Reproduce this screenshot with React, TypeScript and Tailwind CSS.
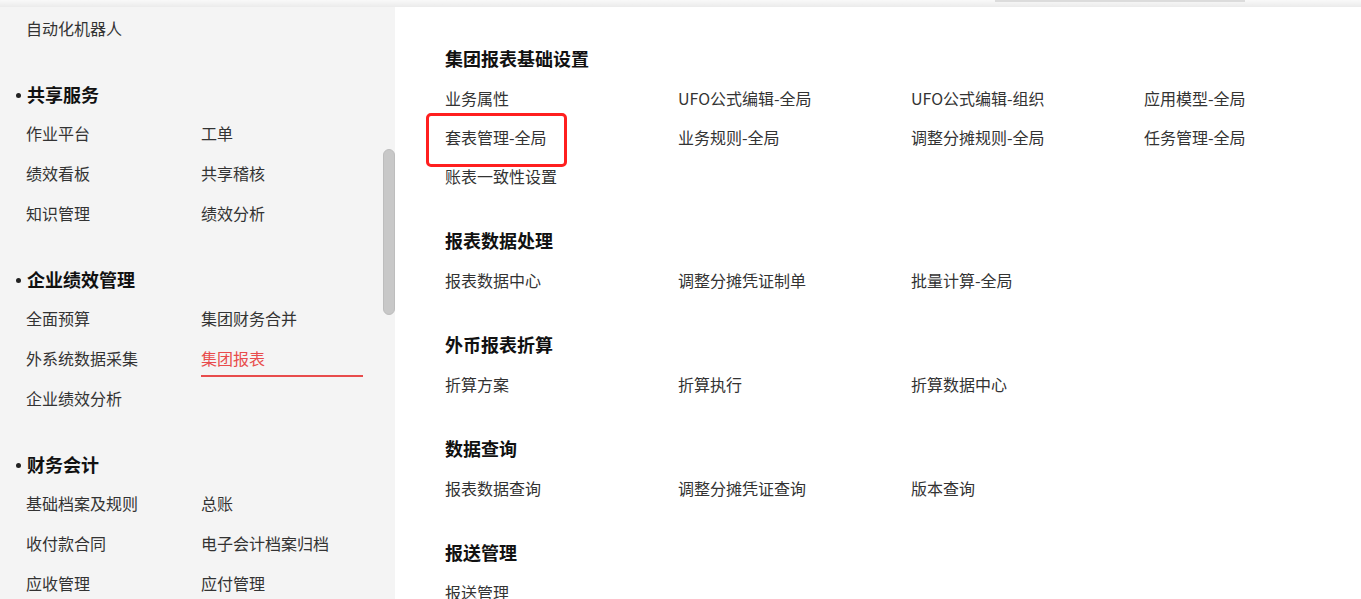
import React from "react";

const font = { fontFamily: '"Noto Sans CJK SC", "Microsoft YaHei", "Liberation Sans", sans-serif' };

type Item = { label: string; active?: boolean };
type LeftSection = { title: string; items: Item[] };

const leftSections: LeftSection[] = [
  { title: "共享服务", items: [{ label: "作业平台" }, { label: "工单" }, { label: "绩效看板" }, { label: "共享稽核" }, { label: "知识管理" }, { label: "绩效分析" }] },
  { title: "企业绩效管理", items: [{ label: "全面预算" }, { label: "集团财务合并" }, { label: "外系统数据采集" }, { label: "集团报表", active: true }, { label: "企业绩效分析" }] },
  { title: "财务会计", items: [{ label: "基础档案及规则" }, { label: "总账" }, { label: "收付款合同" }, { label: "电子会计档案归档" }, { label: "应收管理" }, { label: "应付管理" }] },
];

const rightSections: { title: string; items: string[] }[] = [
  { title: "集团报表基础设置", items: ["业务属性", "UFO公式编辑-全局", "UFO公式编辑-组织", "应用模型-全局", "套表管理-全局", "业务规则-全局", "调整分摊规则-全局", "任务管理-全局", "账表一致性设置"] },
  { title: "报表数据处理", items: ["报表数据中心", "调整分摊凭证制单", "批量计算-全局"] },
  { title: "外币报表折算", items: ["折算方案", "折算执行", "折算数据中心"] },
  { title: "数据查询", items: ["报表数据查询", "调整分摊凭证查询", "版本查询"] },
  { title: "报送管理", items: ["报送管理"] },
];

export default function App() {
  return (
    <div className="w-[1361px] h-[599px] overflow-hidden bg-white flex flex-col" style={font}>
      <div className="h-[7px] shrink-0 bg-linear-to-b from-[#f9f9f9] to-[#ebebeb] flex pl-[995px]">
        <div className="w-[250px] h-[2px] bg-[#dcdcdc]" />
      </div>
      <div className="flex flex-1 min-h-0">
        <aside className="w-[395px] shrink-0 bg-[#f4f4f4] relative pt-[1px]">
          <div className="h-10 flex items-center pl-[26px] text-[16px] text-[#333]">自动化机器人</div>
          {leftSections.map((s) => (
            <div key={s.title} className="mt-[27px]">
              <div className="h-[38px] flex items-center pl-[16px] text-[18px] font-bold text-[#111]">
                <span className="w-[5px] h-[5px] rounded-full bg-[#222] mr-[6px] mt-[2px]" />
                {s.title}
              </div>
              <div className="grid grid-cols-[175px_162px] pl-[26px]">
                {s.items.map((it) => (
                  <div
                    key={it.label}
                    className={`h-10 flex items-center relative text-[16px] ${it.active ? "text-[#e84c4c]" : "text-[#333]"}`}
                  >
                    {it.label}
                    {it.active && <span className="absolute left-0 bottom-[1px] w-[162px] h-[2px] bg-[#e84c4c]" />}
                  </div>
                ))}
              </div>
            </div>
          ))}
          <div className="absolute left-[383px] top-[142px] w-[12px] h-[166px] rounded-[6px] bg-[#c8c8c8] border border-[#bdbdbd]" />
        </aside>
        <main className="flex-1 relative pl-[50px] pt-[31px]">
          {rightSections.map((s, i) => (
            <div key={s.title} className={i === 0 ? "" : "mt-[25px]"}>
              <div className="h-10 flex items-center text-[18px] font-bold text-[#111]">{s.title}</div>
              <div className="grid grid-cols-[233px_233px_233px_233px]">
                {s.items.map((it) => (
                  <div key={it} className="h-[39px] flex items-center text-[16px] text-[#333]">
                    {it}
                  </div>
                ))}
              </div>
            </div>
          ))}
          <div className="absolute left-[31px] top-[106px] w-[141px] h-[54px] border-[3px] border-[#ff1f1f] rounded-[5px]" />
        </main>
      </div>
    </div>
  );
}
